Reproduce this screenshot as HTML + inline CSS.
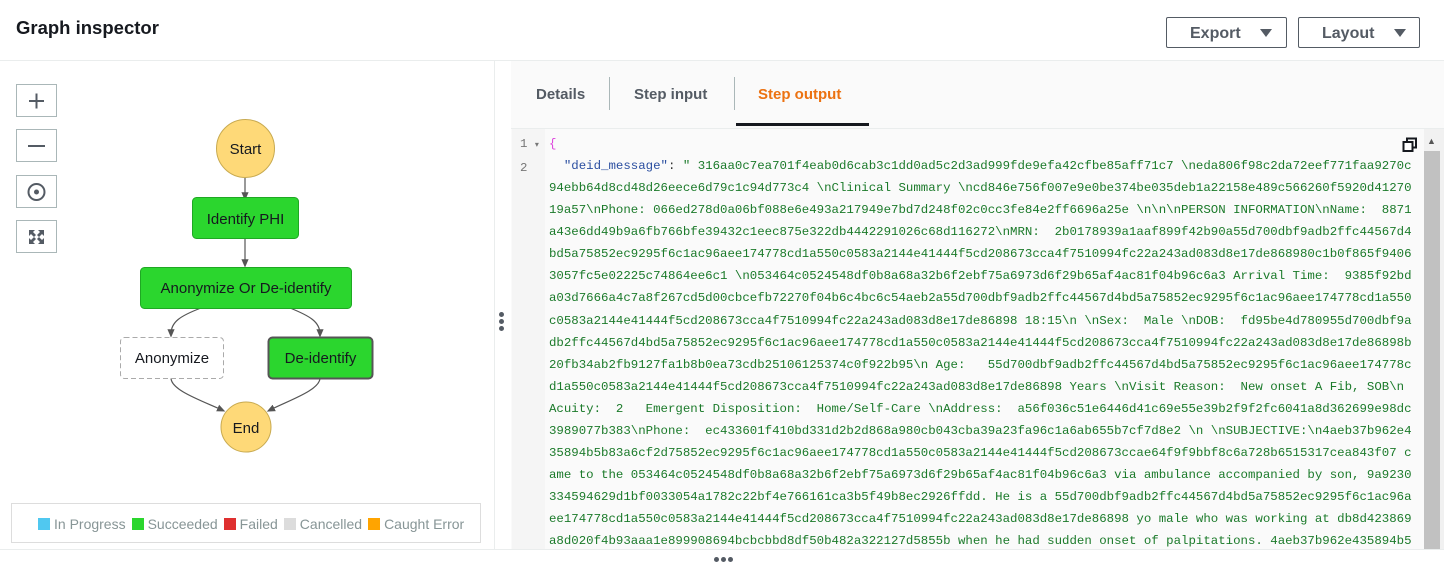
<!DOCTYPE html>
<html><head><meta charset="utf-8"><style>
body{margin:0;width:1444px;height:563px;overflow:hidden;background:#fff;font-family:"Liberation Sans",sans-serif;position:relative}
.a{position:absolute}
.btn{position:absolute;top:17px;height:31px;border:1px solid #545b64;border-radius:2px;background:#fff;color:#545b64;font-weight:bold;font-size:16px;line-height:31px;box-sizing:border-box}
.zb{position:absolute;left:16px;width:41px;height:33px;border:1px solid #aab7b8;box-sizing:border-box;background:#fff}
.code{position:absolute;left:549px;top:133px;font-family:"Liberation Mono",monospace;font-size:12.4px;color:#1b7a2a;white-space:pre;line-height:22.06px}
.tab{position:absolute;top:85px;font-size:15px;font-weight:bold;color:#545b64}
.lg{display:inline-block;width:12px;height:12px;vertical-align:-1px;margin-right:4px;margin-left:6px}
</style></head><body>
<div class="a" style="left:16px;top:17px;font-size:18.5px;font-weight:bold;color:#16191f">Graph inspector</div>
<div class="btn" style="left:1166px;width:121px;padding-left:23px">Export <svg width="14" height="10" style="margin-left:14px"><path d="M1 1h12L7 9z" fill="#545b64"/></svg></div>
<div class="btn" style="left:1298px;width:122px;padding-left:23px">Layout <svg width="14" height="10" style="margin-left:14px"><path d="M1 1h12L7 9z" fill="#545b64"/></svg></div>
<div class="a" style="left:0;top:60px;width:1444px;height:1px;background:#eaeded"></div>
<div class="zb" style="top:84px"><svg width="39" height="31"><path d="M12 16h15M19.5 8.5v15" stroke="#545b64" stroke-width="2"/></svg></div>
<div class="zb" style="top:129px"><svg width="39" height="31"><path d="M11 16h17" stroke="#545b64" stroke-width="2"/></svg></div>
<div class="zb" style="top:175px"><svg width="39" height="31"><circle cx="19.5" cy="16" r="8" fill="none" stroke="#545b64" stroke-width="2"/><circle cx="19.5" cy="16" r="2.5" fill="#545b64"/></svg></div>
<div class="zb" style="top:220px"><svg width="39" height="31"><g fill="#545b64"><path d="M12 9h6l-2 2 3 3-2 2-3-3-2 2z"/><path d="M27 9v6l-2-2-3 3-2-2 3-3-2-2z"/><path d="M12 23v-6l2 2 3-3 2 2-3 3 2 2z"/><path d="M27 23h-6l2-2-3-3 2-2 3 3 2-2z"/></g></svg></div>
<svg class="a" style="left:0;top:60px" width="494" height="440">
<defs><marker id="m" markerWidth="8" markerHeight="8" refX="4" refY="4" orient="auto"><path d="M0 1L7 4L0 7z" fill="#555"/></marker></defs>
<g stroke="#555" stroke-width="1.2" fill="none">
<path d="M245 118v19" marker-end="url(#m)"/>
<path d="M245 178v26" marker-end="url(#m)"/>
<path d="M201 248C180 256 171 262 171 274" marker-end="url(#m)"/>
<path d="M290 248C310 256 320 262 320 274" marker-end="url(#m)"/>
<path d="M171 318C171 330 200 340 222 350" marker-end="url(#m)"/>
<path d="M320 318C320 330 290 340 270 350" marker-end="url(#m)"/>
</g>
<circle cx="245.5" cy="88.5" r="29" fill="#fed978" stroke="#c8aa50"/>
<text x="245.5" y="94" text-anchor="middle" font-size="15" fill="#16191f">Start</text>
<rect x="192.5" y="137.5" width="106" height="41" rx="4" fill="#2bd62e" stroke="#1fa823"/>
<text x="245.5" y="164" text-anchor="middle" font-size="15" fill="#16191f">Identify PHI</text>
<rect x="140.5" y="207.5" width="211" height="41" rx="4" fill="#2bd62e" stroke="#1fa823"/>
<text x="246" y="233" text-anchor="middle" font-size="15" fill="#16191f">Anonymize Or De-identify</text>
<rect x="120.5" y="277.5" width="103" height="41" rx="4" fill="#fff" stroke="#aaa" stroke-dasharray="5 3"/>
<text x="172" y="303" text-anchor="middle" font-size="15" fill="#16191f">Anonymize</text>
<rect x="268.5" y="277.5" width="104" height="41" rx="4" fill="#2bd62e" stroke="#555" stroke-width="2"/>
<text x="320.5" y="303" text-anchor="middle" font-size="15" fill="#16191f">De-identify</text>
<circle cx="246" cy="367" r="25" fill="#fed978" stroke="#c8aa50"/>
<text x="246" y="373" text-anchor="middle" font-size="15" fill="#16191f">End</text>
</svg>
<div class="a" style="left:11px;top:503px;width:470px;height:40px;border:1px solid #ddd;box-sizing:border-box;font-size:14px;color:#879596;line-height:40px;padding-left:20px">
<span class="lg" style="background:#50c8f0"></span>In Progress<span class="lg" style="background:#2bd62e"></span>Succeeded<span class="lg" style="background:#df3030"></span>Failed<span class="lg" style="background:#dcdcdc"></span>Cancelled<span class="lg" style="background:#ffa400"></span>Caught Error</div>
<div class="a" style="left:494px;top:61px;width:16px;height:489px;background:#fff;border-left:1px solid #eaeded;border-right:1px solid #eaeded"></div>
<div class="a" style="left:499px;top:312px;width:5px;height:5px;border-radius:50%;background:#545b64;box-shadow:0 7px 0 #545b64,0 14px 0 #545b64"></div>
<div class="a" style="left:511px;top:61px;width:933px;height:489px;background:#fafafa"></div>
<div class="tab" style="left:536px;top:86px">Details</div>
<div class="a" style="left:609px;top:77px;width:1px;height:33px;background:#aab7b8"></div>
<div class="tab" style="left:634px;top:86px">Step input</div>
<div class="a" style="left:734px;top:77px;width:1px;height:33px;background:#aab7b8"></div>
<div class="tab" style="left:758px;top:86px;color:#ec7211">Step output</div>
<div class="a" style="left:736px;top:123px;width:133px;height:3px;background:#16191f"></div>
<div class="a" style="left:511px;top:128px;width:933px;height:1px;background:#eaeded"></div>
<div class="a" style="left:512px;top:129px;width:33px;height:420px;background:#f5f5f5"></div>
<div class="a" style="left:1424px;top:129px;width:20px;height:420px;background:#f1f1f1"></div>
<div class="a" style="left:1424px;top:151px;width:16px;height:398px;background:#c1c1c1"></div>
<div class="a" style="left:1427px;top:136px;font-size:9px;color:#555">▲</div>
<svg class="a" style="left:1402px;top:137px" width="16" height="16"><rect x="5" y="1.5" width="9" height="9" fill="none" stroke="#16191f" stroke-width="2"/><rect x="1.5" y="5" width="9" height="9" fill="#fff" stroke="#16191f" stroke-width="2"/></svg>
<div class="a" style="left:520px;top:133px;font-family:'Liberation Mono',monospace;font-size:12.4px;color:#777;line-height:22.06px;white-space:pre">1 <span style="font-size:8px">▾</span>
2</div>
<div class="code"><span style="color:#d4d">{</span>
  <span style="color:#2a4ea0">"deid_message"</span><span style="color:#333">:</span> " 316aa0c7ea701f4eab0d6cab3c1dd0ad5c2d3ad999fde9efa42cfbe85aff71c7 \neda806f98c2da72eef771faa9270c
94ebb64d8cd48d26eece6d79c1c94d773c4 \nClinical Summary \ncd846e756f007e9e0be374be035deb1a22158e489c566260f5920d41270
19a57\nPhone: 066ed278d0a06bf088e6e493a217949e7bd7d248f02c0cc3fe84e2ff6696a25e \n\n\nPERSON INFORMATION\nName:  8871
a43e6dd49b9a6fb766bfe39432c1eec875e322db4442291026c68d116272\nMRN:  2b0178939a1aaf899f42b90a55d700dbf9adb2ffc44567d4
bd5a75852ec9295f6c1ac96aee174778cd1a550c0583a2144e41444f5cd208673cca4f7510994fc22a243ad083d8e17de868980c1b0f865f9406
3057fc5e02225c74864ee6c1 \n053464c0524548df0b8a68a32b6f2ebf75a6973d6f29b65af4ac81f04b96c6a3 Arrival Time:  9385f92bd
a03d7666a4c7a8f267cd5d00cbcefb72270f04b6c4bc6c54aeb2a55d700dbf9adb2ffc44567d4bd5a75852ec9295f6c1ac96aee174778cd1a550
c0583a2144e41444f5cd208673cca4f7510994fc22a243ad083d8e17de86898 18:15\n \nSex:  Male \nDOB:  fd95be4d780955d700dbf9a
db2ffc44567d4bd5a75852ec9295f6c1ac96aee174778cd1a550c0583a2144e41444f5cd208673cca4f7510994fc22a243ad083d8e17de86898b
20fb34ab2fb9127fa1b8b0ea73cdb25106125374c0f922b95\n Age:   55d700dbf9adb2ffc44567d4bd5a75852ec9295f6c1ac96aee174778c
d1a550c0583a2144e41444f5cd208673cca4f7510994fc22a243ad083d8e17de86898 Years \nVisit Reason:  New onset A Fib, SOB\n
Acuity:  2   Emergent Disposition:  Home/Self-Care \nAddress:  a56f036c51e6446d41c69e55e39b2f9f2fc6041a8d362699e98dc
3989077b383\nPhone:  ec433601f410bd331d2b2d868a980cb043cba39a23fa96c1a6ab655b7cf7d8e2 \n \nSUBJECTIVE:\n4aeb37b962e4
35894b5b83a6cf2d75852ec9295f6c1ac96aee174778cd1a550c0583a2144e41444f5cd208673ccae64f9f9bbf8c6a728b6515317cea843f07 c
ame to the 053464c0524548df0b8a68a32b6f2ebf75a6973d6f29b65af4ac81f04b96c6a3 via ambulance accompanied by son, 9a9230
334594629d1bf0033054a1782c22bf4e766161ca3b5f49b8ec2926ffdd. He is a 55d700dbf9adb2ffc44567d4bd5a75852ec9295f6c1ac96a
ee174778cd1a550c0583a2144e41444f5cd208673cca4f7510994fc22a243ad083d8e17de86898 yo male who was working at db8d423869
a8d020f4b93aaa1e899908694bcbcbbd8df50b482a322127d5855b when he had sudden onset of palpitations. 4aeb37b962e435894b5</div>
<div class="a" style="left:0;top:549px;width:1444px;height:14px;background:#fff;border-top:1px solid #eaeded"></div>
<div class="a" style="left:714px;top:557px;width:5px;height:5px;border-radius:50%;background:#545b64;box-shadow:7px 0 0 #545b64,14px 0 0 #545b64"></div>
</body></html>
